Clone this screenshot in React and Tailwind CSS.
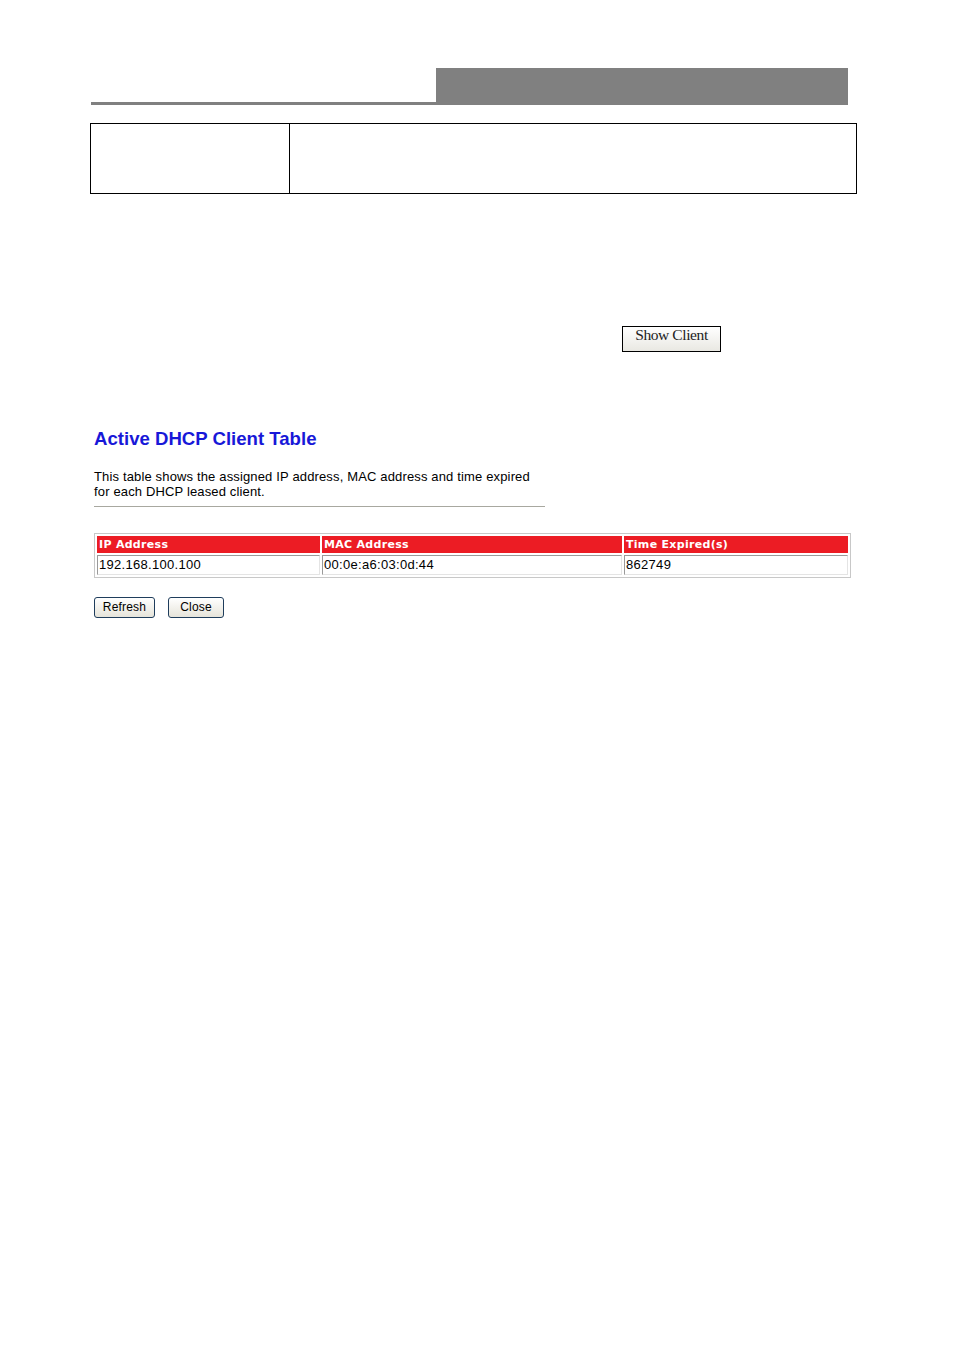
import React from 'react';

const clients = [
  { ip: '192.168.100.100', mac: '00:0e:a6:03:0d:44', expired: '862749' },
];

const cellFont = { fontFamily: '"Liberation Sans", Arial, sans-serif' };

const FormButton = ({ children, width }) => (
  <button
    className={`h-[21px] ${width} rounded-[3px] border border-[#1f3d5c] bg-gradient-to-b from-white to-[#e6e4da] text-[12px] leading-[19px] tracking-[0.2px] text-black`}
    style={cellFont}
  >
    {children}
  </button>
);

export default function App() {
  return (
    <div className="w-[954px] h-[1350px] bg-white" style={cellFont}>
      {/* page header bar */}
      <div className="flex pt-[68px] pl-[91px]">
        <div className="w-[345px] h-[37px] border-b-[3px] border-[#808080]" />
        <div className="w-[412px] h-[37px] bg-[#808080]" />
      </div>

      {/* empty parameter table */}
      <div className="mt-[18px] ml-[90px] flex w-[767px] h-[71px] border border-black">
        <div className="w-[199px] h-full border-r border-black" />
        <div className="flex-1" />
      </div>

      <div className="mt-[132px] ml-[622px]">
        <button
          className="w-[99px] h-[26px] border border-black bg-gradient-to-b from-white to-[#e9e8e2] text-[15.5px] leading-[16px] tracking-[-0.4px] text-[#222] flex justify-center items-start pt-0"
          style={{ fontFamily: '"Liberation Serif", "Times New Roman", serif' }}
        >
          Show Client
        </button>
      </div>

      {/* dhcp client list */}
      <div className="ml-[94px] mt-[76px]">
        <h1 className="text-[18.6px] leading-[22px] font-bold text-[#1818d8]">Active DHCP Client Table</h1>
        <p className="mt-[19px] w-[450px] text-[13px] leading-[15px] tracking-[0.15px] text-black">
          This table shows the assigned IP address, MAC address and time expired for each DHCP leased client.
        </p>
        <div className="mt-[7px] w-[451px] h-px bg-[#a8a8a0]" />

        <table className="mt-[26px] w-[757px] border border-[#c8c8c8] border-separate border-spacing-[2px]">
          <thead>
            <tr>
              {['IP Address', 'MAC Address', 'Time Expired(s)'].map((h, i) => (
                <th
                  key={h}
                  className={`${i === 0 ? 'w-[223px]' : i === 1 ? 'w-[300px]' : 'w-[224px]'} h-[17px] p-0 pl-[2px] bg-[#ec1c24] text-left text-[11px] leading-[17px] font-bold text-white tracking-[0.3px]`}
                  style={{ fontFamily: '"DejaVu Sans", Verdana, sans-serif' }}
                >
                  {h}
                </th>
              ))}
            </tr>
          </thead>
          <tbody>
            {clients.map((c) => (
              <tr key={c.ip}>
                {[c.ip, c.mac, c.expired].map((v, i) => (
                  <td
                    key={i}
                    className="h-[20px] p-0 pl-[1px] border border-t-[#9a9a9a] border-l-[#9a9a9a] border-r-[#e4e4e4] border-b-[#e4e4e4] text-[13px] leading-[18px] tracking-[0.3px] text-black"
                  >
                    {v}
                  </td>
                ))}
              </tr>
            ))}
          </tbody>
        </table>

        <div className="mt-[19px] flex gap-[13px]">
          <FormButton width="w-[61px]">Refresh</FormButton>
          <FormButton width="w-[56px]">Close</FormButton>
        </div>
      </div>
    </div>
  );
}
